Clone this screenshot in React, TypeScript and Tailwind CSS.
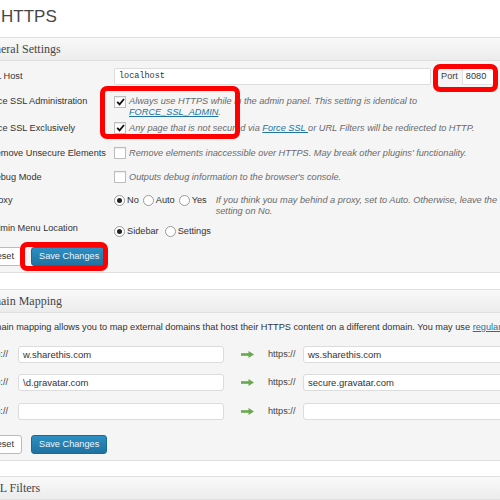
import React from "react";

const Check = ({ on }: { on?: boolean }) => (
  <span className="w-[12px] h-[12px] border border-[#bdbdbd] bg-white flex items-center justify-center shrink-0 shadow-[inset_0_1px_1px_rgba(0,0,0,0.08)]">
    {on && (
      <svg width="9" height="8" viewBox="0 0 9 8">
        <path d="M1.2 3.8 L3.6 6.4 L8 1" stroke="#111" strokeWidth="1.8" fill="none" />
      </svg>
    )}
  </span>
);

const Radio = ({ on }: { on?: boolean }) => (
  <span className="w-[11px] h-[11px] rounded-full border border-[#9a9a9a] bg-white flex items-center justify-center shrink-0">
    {on && <span className="w-[5px] h-[5px] rounded-full bg-[#222]" />}
  </span>
);

const Arrow = () => (
  <svg width="13" height="7" viewBox="0 0 13 7" className="shrink-0">
    <rect x="0" y="2.2" width="8" height="2.6" fill="#6aa84f" />
    <path d="M7.5 0 L13 3.5 L7.5 7 Z" fill="#6aa84f" />
  </svg>
);

const Header = ({ text, pl }: { text: string; pl: string }) => (
  <div
    className={`h-[23px] border-b border-[#dfdfdf] bg-linear-to-b from-[#f9f9f9] to-[#ececec] leading-[22px] text-[12px] text-[#464646] font-['Liberation_Serif',Georgia,serif] whitespace-nowrap ${pl}`}
  >
    {text}
  </div>
);

const Label = ({ children, className = "" }: { children: React.ReactNode; className?: string }) => (
  <div className={`w-[125px] shrink-0 whitespace-nowrap text-[#333] ${className}`}>{children}</div>
);

const Desc = ({ children, className = "" }: { children: React.ReactNode; className?: string }) => (
  <span className={`italic text-[#6a6a6a] whitespace-nowrap ${className}`}>{children}</span>
);

const Link = ({ children }: { children: React.ReactNode }) => (
  <span className="text-[#21759b] underline">{children}</span>
);

const ResetBtn = () => (
  <button className="ml-[-7px] h-[19px] px-[7px] border border-[#bbb] bg-white rounded-[3px] text-[#333] leading-[17px]">
    Reset
  </button>
);

const SaveBtn = () => (
  <button className="ml-[9px] h-[19px] px-[7px] border border-[#1b6a93] bg-linear-to-b from-[#2d8fc4] to-[#1f72a0] rounded-[3px] text-[#eef6fb] leading-[17px]">
    Save Changes
  </button>
);

export default function App() {
  return (
    <div className="relative w-[500px] h-[500px] overflow-hidden bg-white font-['Liberation_Sans',Arial,sans-serif] text-[9.2px] leading-[11px] text-[#333]">
      <h1 className="h-[37px] pt-[7px] pl-[1px] text-[17px] leading-[20px] text-[#464646] font-normal">HTTPS</h1>

      {/* General Settings */}
      <div className="ml-[-40px] w-[600px] border border-[#dfdfdf] bg-[#f5f5f5]">
        <Header text="General Settings" pl="pl-[20px]" />
        <div className="pl-[28px]">
          <div className="h-[31px] pt-[7px] flex items-start">
            <Label className="ml-[-5px] w-[130px]">
              <span className="leading-[17px]">SSL Host</span>
            </Label>
            <div className="w-[317px] h-[17px] border border-[#dcdcdc] bg-white rounded-[2px] pl-[4px] font-['Liberation_Mono',monospace] text-[8.5px] leading-[15px] text-[#333]">
              localhost
            </div>
            <span className="ml-[10px] leading-[17px] text-[#444]">Port</span>
            <div className="ml-[4px] w-[34px] h-[17px] border border-[#e2e2e2] bg-white pl-[3px] leading-[15px] text-[#333]">
              8080
            </div>
          </div>

          <div className="h-[27px] pt-[4px] flex items-start">
            <Label className="ml-[-5px] w-[130px]">Force SSL Administration</Label>
            <div className="flex items-start gap-[3px]">
              <span className="mt-[0px]"><Check on /></span>
              <Desc>
                Always use HTTPS while in the admin panel. This setting is identical to
                <br />
                <Link>FORCE_SSL_ADMIN</Link>.
              </Desc>
            </div>
          </div>

          <div className="h-[25px] pt-[4px] flex items-start">
            <Label className="ml-[-5px] w-[130px]">Force SSL Exclusively</Label>
            <div className="flex items-start gap-[3px]">
              <span className="mt-[-1px]"><Check on /></span>
              <Desc>
                Any page that is not secured via <Link>Force SSL </Link> or URL Filters will be redirected to HTTP.
              </Desc>
            </div>
          </div>

          <div className="h-[24px] pt-[4px] flex items-start">
            <Label>Remove Unsecure Elements</Label>
            <div className="flex items-start gap-[3px]">
              <span className="mt-[-1px]"><Check /></span>
              <Desc>Remove elements inaccessible over HTTPS. May break other plugins' functionality.</Desc>
            </div>
          </div>

          <div className="h-[23px] pt-[4px] flex items-start">
            <Label>Debug Mode</Label>
            <div className="flex items-start gap-[3px]">
              <span className="mt-[-1px]"><Check /></span>
              <Desc>Outputs debug information to the browser's console.</Desc>
            </div>
          </div>

          <div className="h-[28px] pt-[4px] flex items-start">
            <Label>Proxy</Label>
            <div className="flex items-start">
              <span className="flex items-center gap-[2px]"><Radio on />No</span>
              <span className="ml-[4px] flex items-center gap-[2px]"><Radio />Auto</span>
              <span className="ml-[4px] flex items-center gap-[2px]"><Radio />Yes</span>
              <Desc className="ml-[9px]">
                If you think you may behind a proxy, set to Auto. Otherwise, leave the
                <br />
                setting on No.
              </Desc>
            </div>
          </div>

          <div className="h-[21px] pt-[4px] flex items-start">
            <Label>Admin Menu Location</Label>
            <div className="mt-[3px] flex items-center">
              <span className="flex items-center gap-[2px]"><Radio on />Sidebar</span>
              <span className="ml-[6px] flex items-center gap-[2px]"><Radio />Settings</span>
            </div>
          </div>

          <div className="pt-[7px] pb-[6px] flex items-center">
            <ResetBtn />
            <SaveBtn />
          </div>
        </div>
      </div>

      {/* Domain Mapping */}
      <div className="mt-[16px] ml-[-40px] w-[600px] border border-[#dfdfdf] bg-[#f5f5f5]">
        <Header text="Domain Mapping" pl="pl-[16px]" />
        <div className="pl-[28px] pt-[9px] pb-[6px]">
          <div className="ml-[-7px] whitespace-nowrap text-[#333]">
            Domain mapping allows you to map external domains that host their HTTPS content on a different domain. You may use <Link>regular expressions</Link>.
          </div>
          {[
            ["w.sharethis.com", "ws.sharethis.com", "mt-[13px]"],
            ["\\d.gravatar.com", "secure.gravatar.com", "mt-[11px]"],
            ["", "", "mt-[12px]"],
          ].map(([a, b, mt], i) => (
            <div key={i} className={`flex items-center h-[17px] ${mt}`}>
              <span className="ml-[-4px] w-[33px] shrink-0 text-[#444]">http://</span>
              <div className="w-[209px] h-[17px] border border-[#dcdcdc] bg-white rounded-[3px] pl-[4px] text-[9.5px] leading-[15px] text-[#333]">
                {a}
              </div>
              <span className="ml-[17px]"><Arrow /></span>
              <span className="ml-[14px] w-[35px] shrink-0 text-[#444]">https://</span>
              <div className="w-[260px] h-[17px] border border-[#dcdcdc] bg-white rounded-[3px] pl-[4px] text-[9.5px] leading-[15px] text-[#333]">
                {b}
              </div>
            </div>
          ))}
          <div className="mt-[15px] flex items-center">
            <ResetBtn />
            <SaveBtn />
          </div>
        </div>
      </div>

      {/* URL Filters */}
      <div className="mt-[15px] ml-[-40px] w-[600px] h-[60px] border border-[#dfdfdf] bg-[#f5f5f5]">
        <Header text="URL Filters" pl="pl-[22px]" />
      </div>

      {/* annotation boxes */}
      <div className="absolute left-[100px] top-[86px] w-[140px] h-[53px] border-[5px] border-[#f00] rounded-[7px]" />
      <div className="absolute left-[433px] top-[64px] w-[65px] h-[28px] border-[5px] border-[#f00] rounded-[7px]" />
      <div className="absolute left-[20px] top-[242px] w-[88px] h-[29px] border-[5px] border-[#f00] rounded-[7px]" />
    </div>
  );
}
